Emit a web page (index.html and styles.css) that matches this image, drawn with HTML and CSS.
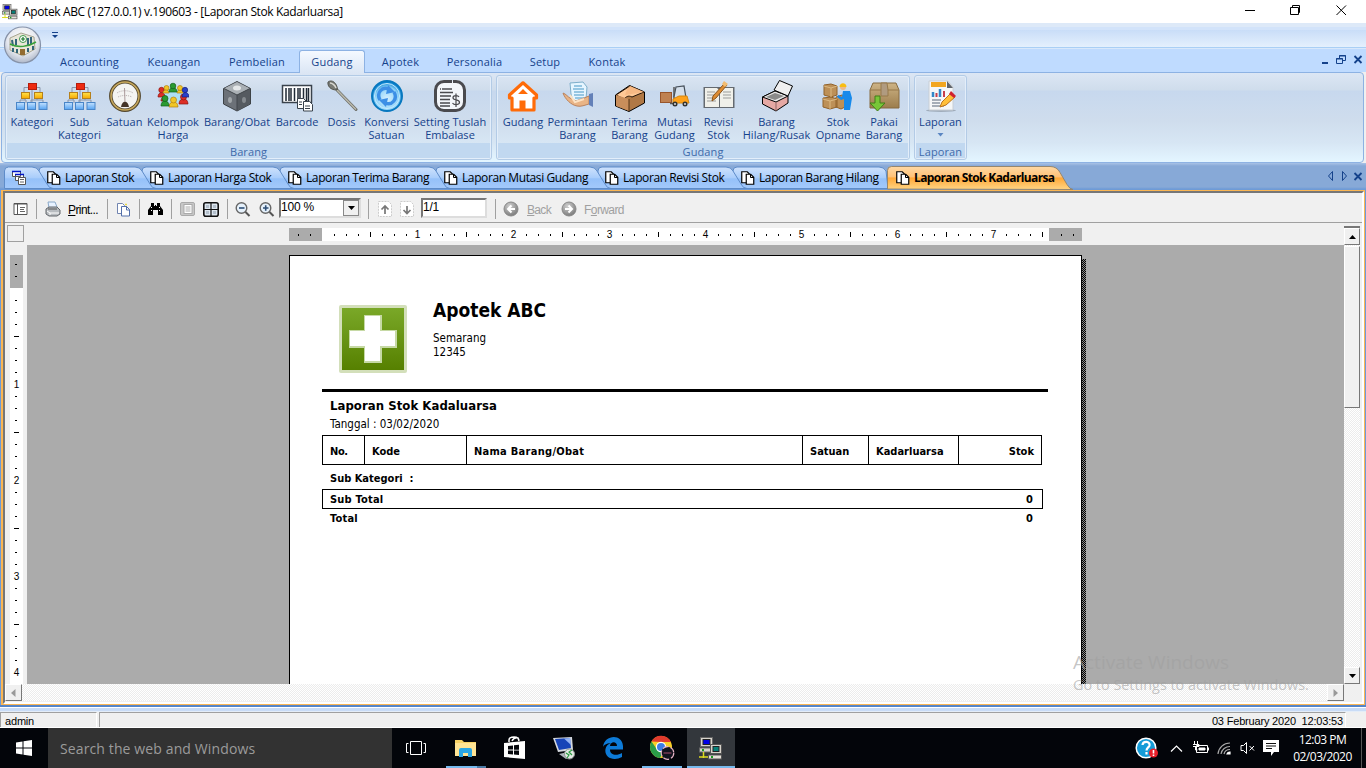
FILE: index.html
```html
<!DOCTYPE html>
<html lang="id">
<head>
<meta charset="utf-8">
<title>Apotek ABC</title>
<link rel="stylesheet" href="styles.css">
</head>
<body>
<svg class="defs" width="0" height="0">
  <defs>
    <linearGradient id="gTab" x1="0" y1="0" x2="0" y2="1"><stop offset="0" stop-color="#cfe2fc"/><stop offset=".5" stop-color="#a9cdfb"/><stop offset=".55" stop-color="#95c1f9"/><stop offset="1" stop-color="#a3c9fb"/></linearGradient>
    <linearGradient id="gAct" x1="0" y1="0" x2="0" y2="1"><stop offset="0" stop-color="#ffd9a4"/><stop offset=".45" stop-color="#ffc277"/><stop offset=".5" stop-color="#ffa838"/><stop offset="1" stop-color="#ffd584"/></linearGradient>
    <linearGradient id="gBlue" x1="0" y1="0" x2="0" y2="1"><stop offset="0" stop-color="#c4e2ff"/><stop offset="1" stop-color="#57a4f2"/></linearGradient>
    <linearGradient id="gYel" x1="0" y1="0" x2="0" y2="1"><stop offset="0" stop-color="#ffe34d"/><stop offset="1" stop-color="#f7a800"/></linearGradient>
    <linearGradient id="gGreen" x1="0" y1="0" x2="0" y2="1"><stop offset="0" stop-color="#7aa828"/><stop offset="1" stop-color="#568000"/></linearGradient>
    <linearGradient id="gBox" x1="0" y1="0" x2="0" y2="1"><stop offset="0" stop-color="#cdb385"/><stop offset="1" stop-color="#9c7d4c"/></linearGradient>
    <radialGradient id="gOrb" cx=".5" cy=".35" r=".65"><stop offset="0" stop-color="#fff"/><stop offset=".65" stop-color="#e4e7ee"/><stop offset="1" stop-color="#aeb7c8"/></radialGradient>
    <radialGradient id="gConv" cx=".5" cy=".6" r=".55"><stop offset="0" stop-color="#d6f0ff"/><stop offset=".7" stop-color="#8ed2f8"/><stop offset="1" stop-color="#0b83d0"/></radialGradient>
    <radialGradient id="gBall" cx=".4" cy=".3" r=".8"><stop offset="0" stop-color="#d0d0d0"/><stop offset="1" stop-color="#707070"/></radialGradient>
    <symbol id="tree" viewBox="0 0 32 32"><path d="M16 8v14M8 12V7.500h16V12M4 23v-3h6v3M15 23v-3h6M27 23v-3h-6v-4M9 20v-4" fill="none" stroke="#8895aa"/><rect x="12.500" y="3.500" width="8" height="6" fill="#ee2a10" stroke="#b51c0c"/><rect x="5.500" y="12.500" width="8" height="6" fill="url(#gYel)" stroke="#b5801c"/><rect x="18.500" y="12.500" width="8" height="6" fill="url(#gYel)" stroke="#b5801c"/><rect x=".5" y="22.500" width="8" height="7" fill="url(#gBlue)" stroke="#4a86c8"/><rect x="11.500" y="22.500" width="8" height="7" fill="url(#gBlue)" stroke="#4a86c8"/><rect x="23" y="22.500" width="8" height="7" fill="url(#gBlue)" stroke="#4a86c8"/></symbol>
    <symbol id="docs" viewBox="0 0 14 14"><path d="M.75.75h5.500l2 2v9H.75z" fill="#fff" stroke="#000" stroke-width="1.200"/><path d="M5.250 3.250h4.500l3 3v7h-7.500z" fill="#fff" stroke="#000" stroke-width="1.200"/><path d="M9.500 3v3.500H13" fill="none" stroke="#000"/></symbol>
    <symbol id="pcs" viewBox="0 0 24 24"><rect x="1.500" y="1.500" width="12" height="9" fill="#d8d4cc" stroke="#666"/><rect x="4" y="3.500" width="7" height="5" fill="#0000e8" stroke="#222"/><rect x=".5" y="12" width="11" height="4" fill="#d8d4cc" stroke="#666"/><rect x="11.500" y="8.500" width="11" height="9" fill="#d8d4cc" stroke="#555"/><rect x="14" y="10.500" width="6" height="5" fill="#078078" stroke="#222"/><rect x="9.500" y="19" width="13" height="4" fill="#e4e0d8" stroke="#555"/><path d="M0 21h9M4.500 16v6" stroke="#dedc20" stroke-width="1.500"/><path d="M3 14h2M12 21h2" stroke="#1a9a20" stroke-width="2"/></symbol>
  </defs>
</svg>

<header class="title-bar">
  <svg class="app-icon" width="16" height="18"><use href="#pcs" width="16" height="17"/></svg>
  <span class="title-text">Apotek ABC (127.0.0.1) v.190603 - [Laporan Stok Kadarluarsa]</span>
  <svg class="win-buttons" width="106" height="23" fill="none" stroke="#000"><path d="M1 10.500h10M46.500 7.500h8v7h-8zM48.500 7V5.500h7v7H54M92.500 5.500l9.500 9.500M102 5.500L92.500 15"/></svg>
</header>

<div class="quick-bar"><svg width="8" height="8"><path d="M1 1.500h6" stroke="#15428b"/><path d="M1 4h6L4 7z" fill="#15428b"/></svg></div>
<nav class="menu-tabs">
  <span>Accounting</span><span>Keuangan</span><span>Pembelian</span><span class="selected">Gudang</span><span>Apotek</span><span>Personalia</span><span>Setup</span><span>Kontak</span>
  <svg class="mdi" width="44" height="14" fill="none" stroke="#15428b"><path d="M2 10h6" stroke-width="2"/><path d="M19.500 5V2.500h6v5H23M19 3h7M16.500 5.500h6v5h-6zM16 6h7"/><path d="M34.500 3l7 7M41.500 3l-7 7" stroke-width="1.800"/></svg>
</nav>
<svg class="orb" width="42" height="42"><circle cx="20.500" cy="21" r="18" fill="url(#gOrb)" stroke="#8692a8" stroke-width="1.200"/><path d="M8 14l11-5 13 4 1 12-12 7-13-6z" fill="#e8e6d8" stroke="#a6a490"/><path d="M10 16l1 6M14 15v6M29 13v8M26 14v7M11 24v4M15 25v4M31 22v4M26 24v4" stroke="#33657a" stroke-width="2"/><path d="M18 25h5v6h-5z" fill="#936c30"/><path d="M8 20c8 4 18 3 26-2" fill="none" stroke="#3aa13c" stroke-width="1.500"/><circle cx="21" cy="15" r="3.500" fill="#fff" stroke="#3e9848"/><path d="M21 13v4M19 15h4" stroke="#187828" stroke-width="1.200"/></svg>

<section class="ribbon">
  <div class="group">
    <div class="items items-barang">
      <div><svg><use href="#tree"/></svg>Kategori</div>
      <div><svg><use href="#tree"/></svg>Sub<br>Kategori</div>
      <div><svg viewBox="0 0 32 32"><circle cx="16" cy="16" r="14.200" fill="#f4f4f2" stroke="#53472e" stroke-width="3.500"/><circle cx="16" cy="16" r="14" fill="none" stroke="#c7a85c" stroke-width="1.500"/><path d="M8 13c4-3 12-3 16 0M9 17c4-2 10-2 14 0" fill="none" stroke="#b5adad" stroke-dasharray="1 1"/><path d="M15.500 8l.5 15" stroke="#a99"/><path d="M12 27c1-7 7-7 8 0z" fill="#453528"/></svg>Satuan</div>
      <div><svg viewBox="0 0 32 32"><ellipse cx="16" cy="16" rx="11" ry="7" fill="#aee0f5"/><g stroke-width=".7"><g fill="#de2e26" stroke="#8b1612"><path d="M1 17c0-6 7-6 7 0zM4 21c0-5 6-5 6 0z"/><circle cx="4.500" cy="10" r="2.700"/><path d="M22 24c0-7 9-7 9 0z"/><circle cx="26.500" cy="17" r="3"/></g><g fill="#f0c728" stroke="#b47f10"><circle cx="9.500" cy="8" r="2.500"/><path d="M6 13c0-4 6-4 6 0zM20 13c0-4 6-4 6 0z"/><circle cx="23" cy="8" r="2.500"/><path d="M12 27c0-7 9-7 9 0z"/><circle cx="16.500" cy="20" r="3"/></g><g fill="#2b9a31" stroke="#13601a"><path d="M12 12c0-6 8-6 8 0z"/><circle cx="16" cy="6" r="2.800"/><path d="M4 26c0-7 8-7 8 0z"/><circle cx="8" cy="18.500" r="3"/></g><g fill="#2740c8" stroke="#152078"><path d="M25 17c0-6 7-6 7 0z"/><circle cx="28" cy="10" r="2.700"/></g></g></svg>Kelompok<br>Harga</div>
      <div><svg viewBox="0 0 32 32"><path d="M16 1.500l13.500 7v15.500L16 31 2.500 24V8.500z" fill="#6c7178" stroke="#3d4247"/><path d="M16 2l13 6.500L16 15 3 8.500z" fill="#aab0b5"/><path d="M16 15l13-6.500V24l-13 6.500z" fill="#555a60"/><path d="M16 15v15M3 8.500L16 15l13-6.500" fill="none" stroke="#42474c"/><ellipse cx="16" cy="8" rx="4" ry="2.500" fill="#e4e7e9"/><ellipse cx="9" cy="20" rx="2" ry="3" fill="#a1a6aa"/><ellipse cx="23" cy="20" rx="2" ry="3" fill="#858a8f"/></svg>Barang/Obat</div>
      <div><svg viewBox="0 0 32 32"><rect x="1.500" y="5.500" width="29" height="17" fill="#fff" stroke="#39424c" stroke-width="1.500"/><path d="M5 8v13M8 8v13M10 8v13M13.500 8v13M17 8v13M19 8v13M22.500 8v13M25.500 8v13M27.500 8v13" stroke="#1f2935" stroke-width="1.500"/><path d="M16.500 18.500h6l3 3v7h-9z" fill="#fff" stroke="#39424c"/><path d="M22.500 21.500h6l3 3v6.500h-9z" fill="#fff" stroke="#39424c"/><path d="M18 22h3M18 24.500h3M24 26h5M24 28.500h5" stroke="#39424c"/></svg>Barcode</div>
      <div><svg viewBox="0 0 32 32"><path d="M11 10L30 29.500" stroke="#6f7069" stroke-width="3" stroke-linecap="round"/><path d="M11 10L30 29.500" stroke="#bab9ae" stroke-width="1.500"/><path d="M2 2c4-3 9 1 9.500 7.500C8 11 1 8 2 2z" fill="#787a74" stroke="#53554f"/><path d="M4 3c2 0 5 2 6 5" stroke="#d9d9d3" stroke-width="1.500" fill="none"/></svg>Dosis</div>
      <div><svg viewBox="0 0 32 32"><circle cx="16" cy="16" r="15" fill="url(#gConv)" stroke="#0878bf" stroke-width="2"/><circle cx="16" cy="16" r="12.500" fill="none" stroke="#c4ebff" stroke-width="1"/><path d="M9 20C5 13 11 6 18 9M23 12c4 7-2 14-9 11" fill="none" stroke="#3c8fe6" stroke-width="3.500"/><path d="M17 5l7 7-9 2zM15 27l-7-7 9-2z" fill="#3c8fe6"/></svg>Konversi<br>Satuan</div>
      <div><svg viewBox="0 0 32 32"><path d="M19 1.500h3a8.500 8.500 0 0 1 8.500 8.500v12a8.500 8.500 0 0 1-8.500 8.500H10A8.500 8.500 0 0 1 1.500 22V10A8.500 8.500 0 0 1 10 1.500h8" fill="#f3f6fa" stroke="#4a4a4e" stroke-width="3"/><path d="M8 9h10M6 9h1M6 12.500h13M6 16h11M6 19.500h10M6 23h10M6 26h10" stroke="#4a4a4e" stroke-width="1.700"/><path d="M25 17c-1-2-6-2-6 .7 0 3 6.500 1.500 6.500 4.600 0 2.800-5.500 3-7 .7M22 13.500V27" fill="none" stroke="#4a4a4e" stroke-width="1.200"/></svg>Setting Tuslah<br>Embalase</div>
    </div>
    <div class="caption">Barang</div>
  </div>
  <div class="group">
    <div class="items items-gudang">
      <div><svg viewBox="0 0 32 32"><path d="M16 2.800L2.500 15v3H5v12h22V18h2.500v-3z" fill="#fff" stroke="#ff6b08" stroke-width="3.200" stroke-linejoin="round"/><path d="M16 9l5 5H11zM12.500 20.500h6V31h-6z" fill="#ff6b08"/></svg>Gudang</div>
      <div><svg viewBox="0 0 32 32"><path d="M8 3l13-1 4 5-1 12-13 2-2-7z" fill="#e6f5ff" stroke="#7daeca"/><path d="M12 6h8M11 9h11M12 12h10M12 15h10M13 18h9" stroke="#4797c5"/><path d="M1 13c3 1 5 4 7 5l6 3 8-3 5-2v8c-4 1-8 3-12 2-6-1-12-7-14-13z" fill="#e9b486" stroke="#b98360"/><path d="M8 15l5 7 9-3" fill="none" stroke="#fde2c3" stroke-width="2"/><path d="M27 14l4-1v14l-4-2z" fill="#6380b8"/></svg>Permintaan<br>Barang</div>
      <div><svg viewBox="0 0 32 32"><path d="M1.500 15l14-9.500L30.500 12v11L15 31.500 1.500 26z" fill="#b07845" stroke="#000"/><path d="M2 15l14-9 14 6-12 5c-4-2-6 0-8 2z" fill="#ffc997" stroke="#241407"/><path d="M16 6c-2 2-4 5-5 9l19-3z" fill="#f7b984"/><path d="M15 19v12L2 26V15z" fill="#c98e5b"/><path d="M15 19v12" stroke="#523217"/></svg>Terima<br>Barang</div>
      <div><svg viewBox="0 0 32 32"><rect x="1.500" y="12.500" width="11" height="10" fill="#bf8152" stroke="#98552c"/><path d="M11 23.500h4M15 7v18" stroke="#555" stroke-width="1.500"/><path d="M15 17l2-10 8-1 2 12" fill="#d4dfeb" stroke="#454e58" stroke-width="1.200"/><path d="M14 19l6-3h8l2 7H14z" fill="#ffa11a" stroke="#d5860f"/><circle cx="16" cy="24" r="2.500" fill="#333"/><circle cx="26" cy="24" r="2.500" fill="#333"/><circle cx="16" cy="24" r="1" fill="#ddd"/><circle cx="26" cy="24" r="1" fill="#ddd"/></svg>Mutasi<br>Gudang</div>
      <div><svg viewBox="0 0 32 32"><path d="M.5 7h31v21H.5z" fill="#656a70"/><path d="M2 8h12l2 2v17H2zM17 10l2-2h11v19H17z" fill="#f0f0ea"/><path d="M4 12h8M4 15h9M4 18h8M4 21h9M20 15h8M20 18h8M20 12h8" stroke="#9b9c9b"/><path d="M21 4L10 16l-1 5 4-3L24 5z" fill="#de8c32" stroke="#8a551c"/><path d="M21 1l4 3-3 3-3-3z" fill="#f2bc71"/></svg>Revisi<br>Stok</div>
      <div><svg viewBox="0 0 32 32"><path d="M1.500 17L14 11l13 5v7L15 31 1.500 24z" fill="#e5a8a4" stroke="#000"/><path d="M1.500 17L14 11l13 5-12 6z" fill="#e8e8e8" stroke="#000"/><path d="M5 17l9-4 9 3-9 4z" fill="#8a8a8a"/><path d="M13 10L18.500.5 31.500 6 27 16z" fill="#f0f0f0" stroke="#000"/><path d="M15 22v9" stroke="#8e6562"/></svg>Barang<br>Hilang/Rusak</div>
      <div><svg viewBox="0 0 32 32"><g fill="#bd9057" stroke="#91622a"><path d="M2 5l7-1 6 2v9l-6 2-7-2zM1 18l8-1 6 2v8l-7 2-7-2zM14 17l6-2 5 2v9l-6 3-5-2z"/></g><path d="M2 6l7 2 6-2M9 8v9M1 19l7 2 7-2M8 21v8" fill="none" stroke="#dcb981"/><circle cx="21" cy="7" r="3" fill="#edb989"/><path d="M17.500 7c0-5 7-5 7 0z" fill="#f8bd12"/><path d="M21 11h7l2 7-2 12h-6V19l-3 1-4-3 1-2 4 2z" fill="#1689eb"/></svg>Stok<br>Opname</div>
      <div><svg viewBox="0 0 32 32"><path d="M5 3h23l3 7v18H2V10z" fill="url(#gBox)" stroke="#866b40"/><path d="M2 10h29" stroke="#96794b"/><path d="M13 3h6l1 7v6h-7z" fill="#b09b80" stroke="#96794b"/><path d="M7 16h5v7h5L9.500 31 2 23h5z" fill="#78c637" stroke="#427c18"/></svg>Pakai<br>Barang</div>
    </div>
    <div class="caption">Gudang</div>
  </div>
  <div class="group">
    <div class="items items-laporan">
      <div><svg viewBox="0 0 32 32"><ellipse cx="16" cy="30.500" rx="15" ry="1.500" fill="#8d98a5" opacity=".7"/><path d="M4 1h19l5 6v23H4z" fill="#f5f7f8" stroke="#c8ced5"/><path d="M6 2h15v5H6z" fill="#f2a620"/><path d="M22 1l6 7h-6z" fill="#5f646b"/><path d="M8 17v-5M15 17V9" stroke="#3187c8" stroke-width="2.500"/><path d="M11.500 17v-4M19 17v-6" stroke="#c63f4c" stroke-width="2"/><path d="M7 20h9M7 23h8M7 26h12" stroke="#8c96a2" stroke-width="1.500"/><path d="M17 22l9-9 4 4-9 8-6 2z" fill="#ffbf39" stroke="#bd741b"/><path d="M24 14l2-3 5 5-2 2z" fill="#cf2230"/></svg>Laporan<svg class="drop" viewBox="0 0 7 5"><path d="M.5 1h6L3.500 4.500z" fill="#5b86c2"/></svg></div>
    </div>
    <div class="caption">Laporan</div>
  </div>
</section>

<nav class="doc-tabs">
  <svg class="tab-shapes" width="1366" height="26" stroke="#5e8cc9">
    <g fill="url(#gTab)">
      <path d="M733 24.500V7q0-4 4-4H879q5 0 7 4l2 17.500z"/>
      <path d="M598 24.500V7q0-4 4-4H726q5 0 7 4l8 13q2 4.500 6 4.500z"/>
      <path d="M436 24.500V7q0-4 4-4H590q5 0 7 4l8 13q2 4.500 6 4.500z"/>
      <path d="M280 24.500V7q0-4 4-4H429q5 0 7 4l8 13q2 4.500 6 4.500z"/>
      <path d="M142 24.500V7q0-4 4-4H273q5 0 7 4l8 13q2 4.500 6 4.500z"/>
      <path d="M39 24.500V7q0-4 4-4H135q5 0 7 4l8 13q2 4.500 6 4.500z"/>
      <path d="M4.500 24.500V7q0-4 4-4H32q5 0 7 4l8 13q2 4.500 6 4.500z"/>
    </g>
    <path d="M887.500 25V6.500q0-4 4-4H1050q7 0 10 6l7 12q3 5 6 5z" fill="url(#gAct)" stroke="#97876d"/>
  </svg>
  <span><svg class="win-list" width="16" height="16"><path d="M.5 1.500h8v5h-8zM3.500 4.500h8v6h-8z" fill="#fff" stroke="#555"/><path d="M0 1.500h9M3 4.500h9" stroke="#0014c8" stroke-width="1.500"/><path d="M6.500 7.500h7v7h-7z" fill="#fff" stroke="#555"/><path d="M8 9.500h4M8 12h4" stroke="#666"/></svg></span>
  <span><svg class="doc"><use href="#docs"/></svg><b>Laporan Stok</b></span>
  <span><svg class="doc"><use href="#docs"/></svg><b>Laporan Harga Stok</b></span>
  <span><svg class="doc"><use href="#docs"/></svg><b>Laporan Terima Barang</b></span>
  <span><svg class="doc"><use href="#docs"/></svg><b>Laporan Mutasi Gudang</b></span>
  <span><svg class="doc"><use href="#docs"/></svg><b>Laporan Revisi Stok</b></span>
  <span><svg class="doc"><use href="#docs"/></svg><b>Laporan Barang Hilang</b></span>
  <span class="current"><svg class="doc"><use href="#docs"/></svg><b>Laporan Stok Kadarluarsa</b></span>
  <svg class="tab-nav" width="40" height="14" fill="none" stroke="#15428b"><path d="M6.500 2.500v9l-4-4.500zM16.500 2.500v9l4-4.500z"/><path d="M28.500 4l7 7M35.500 4l-7 7" stroke-width="1.800"/></svg>
</nav>

<main class="frame">
  <div class="frame-inner">
    <div class="viewer-bar">
      <svg width="15" height="14"><path d="M1 1.500h13v11H1z" fill="#fff" stroke="#555"/><path d="M1 2h13M4.500 2v10" stroke="#555"/><path d="M7 5.500h5M7 7.500h4M7 9.500h5" stroke="#666"/></svg>
      <i></i>
      <svg width="16" height="16"><path d="M4 7L3 1h7l2 5" fill="#e8f2ff" stroke="#8aa8c8"/><path d="M1 8l3-2h8l3 3v4l-3 2H4l-3-2z" fill="#b8bcc0" stroke="#62666b"/><path d="M2 10l3 2h9M5 12v2" stroke="#fff" fill="none"/><path d="M3 8h9" stroke="#555"/></svg>
      <span class="print"><u>P</u>rint...</span>
      <i></i>
      <svg width="15" height="15"><path d="M1.500 1.500h5l2 2v8h-7z" fill="#fff" stroke="#7184b0"/><path d="M5.500 4.500h5l3 3v6.500h-8z" fill="#fff" stroke="#5470aa"/><path d="M10.500 4v4h3" fill="none" stroke="#5470aa"/><path d="M9 2.500h2" stroke="#e8d848" stroke-width="1.500"/></svg>
      <i></i>
      <svg width="15" height="14"><path d="M3 1h3v3h1V3h1v1h1V1h3v3l3 4v5h-5V8H5v5H0V8l3-4z" fill="#000"/><path d="M3.500 5v5M11.500 5v5" stroke="#fff" stroke-dasharray="1 2"/></svg>
      <i></i>
      <svg width="15" height="14"><rect x=".5" y=".5" width="14" height="13" rx="1.500" fill="#c7c7c7" stroke="#aaa"/><rect x="4" y="2.500" width="8" height="9" fill="#fff" stroke="#aaa"/><path d="M5.500 5h5M5.500 7h5M5.500 9h5" stroke="#aaa"/></svg>
      <svg width="16" height="15"><rect x=".8" y=".8" width="14.400" height="13.400" rx="2" fill="#dde6ef" stroke="#111" stroke-width="1.600"/><path d="M8 1v13M1 7.500h14" stroke="#111" stroke-width="1.200"/><path d="M4.500 3v3M11.500 3v3M4.500 9v3M11.500 9v3" stroke="#b4c0cc" stroke-width="3"/></svg>
      <i></i>
      <svg width="16" height="16"><circle cx="6.500" cy="7" r="5.300" fill="#e6f1fb" stroke="#666" stroke-width="1.400"/><path d="M10.500 11l4 4" stroke="#555" stroke-width="2"/><path d="M4 7h5.500" stroke="#2e4e76" stroke-width="1.600"/></svg>
      <svg width="16" height="16"><circle cx="6.500" cy="7" r="5.300" fill="#e6f1fb" stroke="#666" stroke-width="1.400"/><path d="M10.500 11l4 4" stroke="#555" stroke-width="2"/><path d="M4 7h5.500M6.700 4.300v5.400" stroke="#2e4e76" stroke-width="1.600"/></svg>
      <div class="combo"><span>100 %</span><em><svg width="7" height="4"><path d="M0 0h7L3.500 4z"/></svg></em></div>
      <i></i>
      <svg width="14" height="16"><path d="M.5.500h10l3 3v12H.5z" fill="#fff" stroke="#ccc" stroke-dasharray="2 1"/><path d="M7 13V6M3.500 8.500L7 5l3.500 3.500" fill="none" stroke="#777" stroke-width="1.700"/></svg>
      <svg width="14" height="16"><path d="M.5.500h10l3 3v12H.5z" fill="#fff" stroke="#ccc" stroke-dasharray="2 1"/><path d="M7 5v7M3.500 9L7 12.500 10.500 9" fill="none" stroke="#777" stroke-width="1.700"/></svg>
      <div class="page-no">1/1</div>
      <i></i>
      <svg width="16" height="16"><circle cx="8" cy="8" r="7" fill="url(#gBall)" stroke="#888"/><path d="M12 8H5M8.500 4.500L5 8l3.500 3.500" fill="none" stroke="#fff" stroke-width="2"/></svg>
      <span class="off back"><u>B</u>ack</span>
      <svg width="16" height="16"><circle cx="8" cy="8" r="7" fill="url(#gBall)" stroke="#888"/><path d="M4 8h7M7.500 4.500L11 8l-3.500 3.500" fill="none" stroke="#fff" stroke-width="2"/></svg>
      <span class="off fwd">F<u>o</u>rward</span>
    </div>
    <div class="viewer">
      <div class="corner"><b></b></div>
      <svg class="ruler-x" width="1317" height="22">
        <defs><pattern id="px" x="0" width="96" height="13" y="5" patternUnits="userSpaceOnUse" patternTransform="translate(295 0)"><path d="M12.500 6v2M24.500 6v2M36.500 6v2M48.500 4v5M60.500 6v2M72.500 6v2M84.500 6v2" stroke="#000"/></pattern></defs>
        <path d="M262 5h793v13H262z" fill="#fff"/><path d="M262 5h33v13h-33zM1022 5h33v13h-33z" fill="#ababab"/>
        <rect x="295" y="5" width="727" height="13" fill="url(#px)"/>
        <path d="M271.500 11v2M283.500 11v2M1034.500 11v2M1046.500 11v2" stroke="#000"/>
        <g class="nums"><text x="390.500" y="15">1</text><text x="486.500" y="15">2</text><text x="582.500" y="15">3</text><text x="678.500" y="15">4</text><text x="774.500" y="15">5</text><text x="870.500" y="15">6</text><text x="966.500" y="15">7</text></g>
      </svg>
      <svg class="ruler-y" width="22" height="439">
        <defs><pattern id="py" width="22" height="96" patternUnits="userSpaceOnUse" patternTransform="translate(0 43)"><path d="M10 12.500h2M10 24.500h2M10 36.500h2M9 48.500h5M10 60.500h2M10 72.500h2M10 84.500h2" stroke="#000"/></pattern></defs>
        <path d="M5 10h13v429H5z" fill="#fff"/><path d="M5 10h13v33H5z" fill="#ababab"/><rect y="43" width="22" height="396" fill="url(#py)"/>
        <path d="M10 19.500h2M10 31.500h2" stroke="#000"/>
        <g class="nums"><text x="11.500" y="143">1</text><text x="11.500" y="239">2</text><text x="11.500" y="335">3</text><text x="11.500" y="431">4</text></g>
      </svg>
      <div class="canvas">
        <article class="page">
          <div class="letterhead">
            <svg class="logo" width="69" height="71"><rect x="0" y="0" width="68" height="68" rx="2" fill="#d3dfba"/><rect x="3" y="3" width="62" height="62" fill="url(#gGreen)"/><path d="M25 10h18v15h15v18H43v15H25V43H10V25h15z" fill="#c6d9a5"/><path d="M26 11h15v15h15v15H41v15H26V41H11V26h15z" fill="#fff"/></svg>
            <div><h1>Apotek ABC</h1><p>Semarang<br>12345</p></div>
          </div>
          <h2>Laporan Stok Kadaluarsa</h2>
          <p class="date">Tanggal : 03/02/2020</p>
          <div class="cols"><span class="c1">No.</span><span class="c2">Kode</span><span class="c3">Nama Barang/Obat</span><span class="c4">Satuan</span><span class="c5">Kadarluarsa</span><span class="c6">Stok</span></div>
          <div class="sub-cat">Sub Kategori&nbsp; :</div>
          <div class="sub-total"><span>Sub Total</span><span>0</span></div>
          <div class="total"><span>Total</span><span>0</span></div>
        </article>
        <div class="page-shadow"></div>
      </div>
      <div class="vscroll"><div class="split"></div><div class="btn"><svg width="7" height="4"><path d="M3.500 0L7 4H0z"/></svg></div><div class="thumb"></div><div class="btn last"><svg width="7" height="4"><path d="M0 0h7L3.500 4z"/></svg></div></div>
    </div>
    <div class="hscroll"><div class="btn"><svg width="5" height="8"><path d="M4.500 0v8L0 4z" fill="#999"/></svg></div><div class="btn"><svg width="5" height="8"><path d="M.5 0v8L5 4z" fill="#999"/></svg></div><div class="grip"></div></div>
  </div>
</main>

<div class="pale-band"></div>
<footer class="status"><div class="user">admin</div><div class="stamp">03 February 2020&nbsp; 12:03:53</div></footer>

<div class="watermark"><div class="w1">Activate Windows</div><div class="w2">Go to Settings to activate Windows.</div></div>

<div class="taskbar">
  <div><svg width="18" height="18"><path d="M1 3.500l6.500-1v6H1zM8.500 2.300L17 1v7.500H8.500zM1 9.500h6.500v6L1 14.500zM8.500 9.500H17V17l-8.500-1.300z" fill="#fff"/></svg></div>
  <div class="search"><span>Search the web and Windows</span></div>
  <div><svg width="20" height="14" fill="none" stroke="#fff"><path d="M4.500.500h11v13h-11zM2.500 2.500H.5v9h2M17.500 2.500h2v9h-2"/></svg></div>
  <div class="running more"><svg width="22" height="20"><path d="M0 2h7l2 2h12v14H0z" fill="#f7d267"/><path d="M0 5h21v13H0z" fill="#ffe494"/><path d="M4 19v-7q0-2 2-2h9q2 0 2 2v7h-4v-4H8v4z" fill="#2aa6e4"/></svg></div>
  <div><svg width="22" height="24"><path d="M0 7l21-2v18l-21-2z" fill="#fff"/><path d="M5 6V4q0-3 5-3t5 4M8 5q2-4 6-3l1 3" fill="none" stroke="#fff" stroke-width="1.500"/><path d="M4 10l5-.5v4H4zM10 9.300l5-.5v5h-5zM4 14.500h5v4L4 18zM10 14.500h5V19l-5-.5z" fill="#05070c"/></svg></div>
  <div><svg width="24" height="24"><path d="M1 2l19-1 1 13-15 2z" fill="#d4d8de"/><path d="M3 3l15-1 1 10-12 2z" fill="#1744b8"/><path d="M12 2.500l6-.5 1 7z" fill="#94b4f5"/><path d="M7 18l9-2 5 3-7 4z" fill="#aeb3bb"/><circle cx="17.500" cy="18" r="5" fill="#e4e9e4" stroke="#8c9490"/><path d="M14 17l3 2-2 3M20 14l-3 2 3 3" fill="none" stroke="#2b9c42" stroke-width="1.200"/></svg></div>
  <div><svg width="22" height="22"><path d="M1 10C2-2 20-4 21 9v3.500H8c0 6 7 6.500 12 3.500v4C11 25 2 20 3.500 12 4 9 6 7 9 6 4 6.500 2 8 1 10zm7-1h7c0-5-6.500-5-7 0z" fill="#0d7bd8"/></svg></div>
  <div class="running"><svg width="26" height="26"><circle cx="12" cy="12" r="11" fill="#f7ce28"/><path d="M2.500 6.500A11 11 0 0 1 22 7H12z" fill="#e13b2d"/><path d="M2.500 6.500A11 11 0 0 0 11 23l5-9-4 2-5-3z" fill="#2a9d48"/><circle cx="12" cy="12" r="5.200" fill="#fff"/><circle cx="12" cy="12" r="4" fill="#3d7de4"/><circle cx="18.500" cy="18" r="6.300" fill="#10121d" stroke="#e7b4c6" stroke-width="1.200" stroke-dasharray="6 2"/><path d="M14.500 18h8" stroke="#a94a6d"/></svg></div>
  <div class="active"><svg width="24" height="24"><use href="#pcs" width="24" height="24"/></svg></div>
  <div></div>
  <div><svg width="24" height="24"><circle cx="11" cy="12" r="9.800" fill="#159cd8" stroke="#fff" stroke-width="1.500"/><path d="M7.500 9c.5-4.500 8-4 7 .5-.5 2-3 2-3 5M11.500 16v2.500" fill="none" stroke="#fff" stroke-width="2.200"/><circle cx="18.500" cy="17" r="4.500" fill="#e8202a"/><path d="M18.500 14v3.500M18.500 18.500v1.500" stroke="#fff" stroke-width="1.600"/></svg></div>
  <div><svg width="13" height="9"><path d="M1 7.500L6.500 2 12 7.500" fill="none" stroke="#fff" stroke-width="1.200"/></svg></div>
  <div><svg width="17" height="14" fill="none" stroke="#fff"><path d="M4.500 4.500h11v7h-11zM16.500 6.500v3"/><path d="M7 7h6v2H7z" fill="#fff"/><path d="M2.500 0v3M5.500 0v3M1 3.500h6v2H1M3.500 5v4h2" /></svg></div>
  <div><svg width="14" height="14" fill="none" stroke="#aaa" stroke-width="1.200"><path d="M1 13A12 12 0 0 1 13 2M4 13a9 9 0 0 1 9-7.500M7 13a6 6 0 0 1 6-4.500"/><path d="M10 13a3 3 0 0 1 3-2v2z" fill="#fff" stroke="#fff"/></svg></div>
  <div><svg width="15" height="14" fill="none" stroke="#fff"><path d="M1 4.500h2.500L6.500 1.500v11l-3-3H1zM9.500 5l4.500 4.500M14 5L9.500 9.500"/></svg></div>
  <div><svg width="17" height="16"><path d="M0 0h16v12h-5l-3 4v-4H0z" fill="#fff"/><path d="M3 3.500h10M3 6h10M3 8.500h6" stroke="#111"/></svg></div>
  <div class="clock"><span>12:03 PM</span><span>02/03/2020</span></div>
  <div class="peek"></div>
</div>
</body>
</html>
```

FILE: styles.css
```css
* { box-sizing: border-box; }
body { margin: 0; width: 1366px; height: 768px; overflow: hidden; position: relative; font: 11px/13px "Open Sans", "Noto Sans", sans-serif; color: #000; background: #f0f0f0; }
svg { display: block; flex: none; }
h1, h2, p { margin: 0; }
.defs { position: absolute; }

.title-bar { height: 23px; background: #fff; display: flex; align-items: center; padding-left: 2px; }
.title-text { margin-left: 5px; font-size: 12px; letter-spacing: -.37px; white-space: nowrap; }
.win-buttons { margin-left: auto; margin-right: 16px; }

.quick-bar { height: 26px; padding: 8px 0 0 51px; border-bottom: 1px solid #d8e8fb; background: linear-gradient(#dde9f8 0 4px, #d2e3fa 4px 7px, #c9ddf8 7px, #e4f0fd 24px, #a9cff5 24px); }
.orb { position: absolute; left: 2px; top: 24px; }
.menu-tabs { height: 23px; background: #bfdbff; position: relative; display: grid; grid-template-columns: 87px 82px 84px 66px 71px 77px 64px 60px; padding-left: 46px; color: #15428b; text-align: center; line-height: 26px; letter-spacing: .2px; }
.menu-tabs .selected { background: linear-gradient(#f4f9ff, #dbe6f4); border: 1px solid #8db2e3; border-bottom: 0; border-radius: 3px 3px 0 0; margin-top: 1px; height: 23px; line-height: 22px; z-index: 1; }
.mdi { position: absolute; left: 1320px; top: 4px; }

.ribbon { height: 91px; margin: 0 2px 0 1px; border: 1px solid #8db2e3; border-radius: 4px; padding: 2px 2px 1px 3px; display: flex; gap: 4px; background: linear-gradient(#dce6f4, #cfddec 17px, #c7d8ee 18px, #cfdded 48px, #d7e6f4 70px, #e3f5ff 88px); }
.group { height: 85px; border: 1px solid #b3cbe6; border-radius: 3px; box-shadow: inset 0 0 0 1px #e3eefa; display: flex; flex-direction: column; padding: 1px; }
.items { display: grid; color: #15428b; text-align: center; height: 66px; padding: 3px 0 0 1px; white-space: nowrap; letter-spacing: .03px; }
.items svg { width: 32px; height: 32px; margin: 0 auto 3px; }
.items .drop { width: 7px; height: 5px; margin: 4px auto; }
.items-barang { grid-template-columns: 48px 47px 43px 54px 74px 46px 43px 47px 80px; }
.items-gudang { grid-template-columns: 48px 61px 43px 47px 41px 75px 48px 44px; padding-right: 2px; }
.items-laporan { grid-template-columns: 49px; padding-left: 0; }
.caption { height: 15px; background: #c1d8f0; text-align: center; color: #3e6aaa; line-height: 17px; letter-spacing: .1px; }

.doc-tabs { height: 27px; position: relative; display: grid; grid-template-columns: 35px 103px 138px 156px 161px 136px 155px 180px; padding: 2px 0 0 4px; background: linear-gradient(#a9c2e6, #87a9d7 3px 24px, #6f9bd6 26px); font-size: 12px; letter-spacing: -.4px; }
.doc-tabs > span { position: relative; display: flex; align-items: center; gap: 4px; padding-left: 8px; height: 25px; }
.doc-tabs b { font-weight: 400; white-space: nowrap; }
.doc-tabs .current b { font-weight: 700; letter-spacing: -.63px; }
.tab-shapes { position: absolute; left: 0; top: 1px; }
.doc { width: 14px; height: 14px; }
.tab-nav { position: absolute; left: 1326px; top: 6px; }

.frame { height: 517px; padding: 1px 1px 0; border-bottom: 2px solid #5685c8; background: linear-gradient(90deg, #6f9bd6 0 1px, #fbb653 1px 1365px, #6f9bd6 1365px); }
.frame-inner { height: 513px; margin: 0 1px 0 2px; border: 2px solid; border-color: #777 #fff #fff #777; background: #f0f0f0; }
.viewer-bar { height: 30px; border-bottom: 1px solid #a0a0a0; display: grid; align-items: center; justify-items: center; grid-template-columns: 31px 1px 31px 30px 18px 15px 16px 17px 15px 17px 30px 2px 30px 17px 86px 15px 17px 28px 66px 16px 15px 42px 18px 52px; font: 12px/16px "Liberation Sans", sans-serif; letter-spacing: -.6px; padding-top: 3px; }
.viewer-bar > span { padding-top: 2px; }
.viewer-bar > i { width: 1px; height: 20px; background: #a0a0a0; }
.viewer-bar .off { color: #a0a0a0; }
.viewer-bar .back { letter-spacing: -.7px; }
.combo, .page-no { height: 20px; background: #fff; border: 2px solid; border-color: #777 #ddd #ddd #777; margin-bottom: 2px; letter-spacing: -.2px; }
.combo { width: 82px; display: flex; justify-content: space-between; line-height: 15px; justify-self: end; }
.combo em { width: 16px; background: #f0f0f0; border: 1px solid #888; display: flex; align-items: center; justify-content: center; }
.page-no { width: 66px; line-height: 15px; }

.viewer { height: 461px; display: grid; grid-template-columns: 22px 1317px 16px; grid-template-rows: 22px 439px; }
.corner { padding: 2px; }
.corner b { display: block; width: 17px; height: 17px; border: 1px solid #a0a0a0; }
.nums { font: 10px "Liberation Sans", sans-serif; text-anchor: middle; }
.ruler-y { grid-column: 1; grid-row: 2; }
.canvas { grid-column: 2; grid-row: 2; background: #ababab; overflow: hidden; display: flex; padding: 10px 0 0 262px; }
.vscroll { grid-column: 3; grid-row: 1 / 3; display: flex; flex-direction: column; }
.vscroll, .hscroll { background: repeating-conic-gradient(#fff 0 25%, #ececec 0 50%) 0 0 / 2px 2px; }
.split { height: 5px; background: #f0f0f0; border-bottom: 2px solid #777; }
.btn { width: 16px; height: 17px; background: #f0f0f0; border: 1px solid; border-color: #fff #777 #777 #fff; display: flex; align-items: center; justify-content: center; flex: none; }
.thumb { height: 162px; margin-top: 1px; background: #f0f0f0; border: 1px solid; border-color: #fff #777 #777 #fff; }
.last { margin-top: auto; }
.hscroll { height: 17px; display: flex; justify-content: space-between; }
.hscroll .btn { width: 17px; }
.hscroll .btn:nth-child(2) { margin-left: auto; }
.grip { width: 18px; background: #f0f0f0; }

.page { width: 793px; flex: none; background: #fff; border: 1px solid #000; border-bottom: 0; padding: 0 32px; font: 11px/14px "DejaVu Sans Condensed", "DejaVu Sans", sans-serif; }
.page-shadow { width: 4px; margin-top: 4px; background: repeating-conic-gradient(#000 0 25%, #888 0 50%) 0 0 / 2px 2px; }
.letterhead { height: 136px; width: 726px; border-bottom: 3px solid #000; padding: 49px 0 0 17px; display: flex; gap: 25px; }
.letterhead h1 { font-size: 19px; line-height: 22px; margin: -6px 0 10px; }
.letterhead p, .date { font-size: 11.5px; }
.page h2 { font-size: 13px; line-height: 16px; margin: 6px 0 0 8px; letter-spacing: .05px; }
.date { margin: 3px 0 3px 8px; line-height: 15px; }
.cols { display: grid; grid-template-columns: 42px 102px 336px 66px 90px 82px; grid-template-rows: 28px; width: 720px; height: 30px; border: 1px solid #000; font-weight: 700; line-height: 31px; }
.cols span { padding-left: 7px; border-right: 1px solid #000; justify-self: stretch; height: 28px; }
.cols .c1 { letter-spacing: -.4px; }
.cols .c3 { letter-spacing: .28px; }
.cols .c6 { border: 0; text-align: right; padding-right: 7px; }
.sub-cat { font-weight: 700; height: 24px; line-height: 27px; padding-left: 8px; }
.sub-total, .total { font-weight: 700; display: flex; justify-content: space-between; width: 721px; height: 20px; padding: 0 9px 0 7px; line-height: 19px; letter-spacing: .2px; }
.sub-total { border: 1px solid #000; }
.total { padding: 0 10px 0 8px; line-height: 20px; }

.pale-band { height: 5px; background: linear-gradient(#fff 0 1px, #c9dcf7 1px 4px, #e4edf8 4px); }
.status { height: 16px; display: flex; gap: 2px; background: #f0f0f0; border-bottom: 1px solid #fff; font: 11px/16px "Liberation Sans", sans-serif; letter-spacing: -.18px; }
.status div { border-top: 1px solid #a0a0a0; border-left: 1px solid #a0a0a0; border-right: 1px solid #fff; }
.user { width: 97px; padding-left: 4px; }
.stamp { width: 1247px; text-align: right; padding-right: 2px; }

.watermark { position: absolute; left: 1073px; top: 651px; color: rgba(160,160,160,.6); white-space: nowrap; }
.w1 { font-size: 19px; line-height: 22px; }
.w2 { font-size: 14.4px; line-height: 24px; }

.taskbar { height: 40px; background: #03050a; display: grid; grid-template-columns: 48px 344px 48px 51px 48px 50px 48px 50px 48px 396px 32px 26px 23px 23px 24px 25px 77px 5px; color: #fff; }
.taskbar > div { display: flex; align-items: center; justify-content: center; }
.taskbar .search { background: #323232; color: #9b9b9b; justify-content: flex-start; padding: 0 0 0 12px; font-size: 14px; white-space: nowrap; letter-spacing: .12px; }
.taskbar .running { background: linear-gradient(#76b9ed, #76b9ed) 50% 100% / 40px 2px no-repeat; }
.taskbar .more { background: linear-gradient(90deg, #76b9ed 0 31px, #4a7aa5 31px) 50% 100% / 40px 2px no-repeat; }
.taskbar .active { background: #33373c; border-bottom: 2px solid #76b9ed; padding: 2px 0 0; }
.taskbar .clock { flex-direction: column; font-size: 12px; line-height: 17px; letter-spacing: -.5px; padding: 0 0 1px; }
.peek { border-left: 1px solid #555; }
```
